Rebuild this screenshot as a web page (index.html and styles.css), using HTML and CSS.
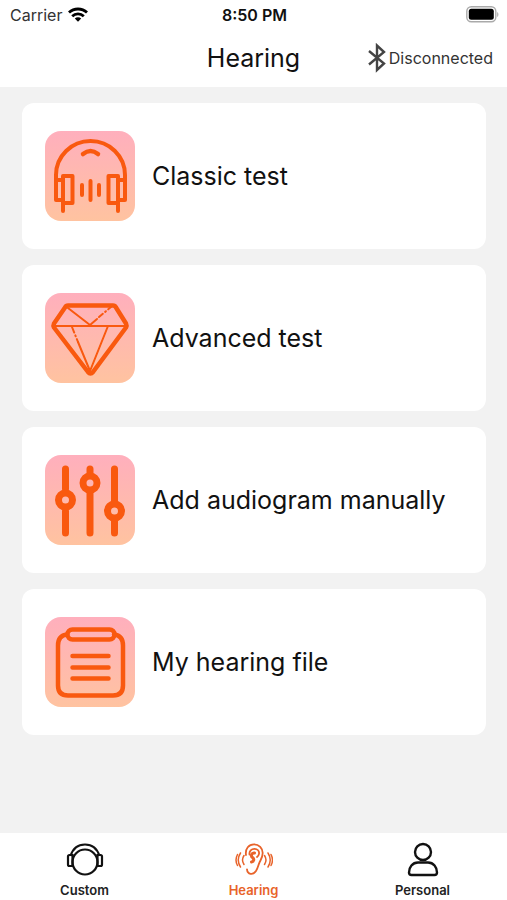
FILE: index.html
```html
<!DOCTYPE html>
<html lang="en">
<head>
    <meta charset="UTF-8">
    <meta name="viewport" content="width=device-width, initial-scale=1.0">
    <title>Hearing</title>
    <link rel="stylesheet" href="styles.css">
</head>
<body>
    <header>
        <div class="status-bar">
            <div class="carrier">
                <span>Carrier</span>
                <svg width="20" height="15" viewBox="0 0 20 15" fill="none" stroke="#000" stroke-width="2.8">
                    <path d="M1 5.6a13 13 0 0 1 18 0"/>
                    <path d="M4.2 9.2a8.4 8.4 0 0 1 11.6 0"/>
                    <path d="M10 14.8 6.8 11.6a4.6 4.6 0 0 1 6.4 0z" fill="#000" stroke="none"/>
                </svg>
            </div>
            <div class="time">8:50 PM</div>
            <div class="battery">
                <svg width="33" height="17" viewBox="0 0 33 17">
                    <rect x="0.8" y="0.8" width="29" height="15" rx="4.5" fill="none" stroke="#aaa" stroke-width="1.4"/>
                    <rect x="2.8" y="2.8" width="25" height="11" rx="2.5" fill="#000"/>
                    <path d="M31.2 6v5c1.6-.8 1.6-4.2 0-5z" fill="#aaa"/>
                </svg>
            </div>
        </div>
        <div class="title-bar">
            <h1>Hearing</h1>
            <div class="connection">
                <svg width="19" height="30" viewBox="0 0 19 30" fill="none" stroke="#444" stroke-width="2.4">
                    <path d="M1 8l15 12.500-7 6.500V2.500l7 6.500L1 21.500"/>
                </svg>
                <span>Disconnected</span>
            </div>
        </div>
    </header>

    <main>
        <button class="card">
            <svg class="card-icon" viewBox="0 0 90 90">
                <g stroke-width="4">
                    <path d="M11 49v-5a34.5 34 0 0 1 69 0v5"/>
                    <path d="M38 23q7.5-6 15 0" stroke-width="4.5"/>
                    <rect x="18" y="45" width="9.5" height="27"/>
                    <rect x="63.5" y="45" width="9.5" height="27"/>
                    <path d="M18 49h-7v20h7M73 49h7v20h-7M18 72v8M73 72v8"/>
                    <path d="M37 54v10M45.5 50v19M54 54v10"/>
                </g>
            </svg>
            <span>Classic test</span>
        </button>
        <button class="card">
            <svg class="card-icon" viewBox="0 0 90 90">
                <path d="M23 12.5h45q2 0 3 2l10 16q1 2 0 4L48 79q-2.5 3-5 0L9 34.5q-1-2 0-4l11-16q1-2 3-2z" stroke-width="4.5"/>
                <g stroke-width="2">
                    <path d="M9 33h73M23 15l22 17 7-6M63 33 45 78 33 49"/>
                    <path d="M54 24l12-10" stroke-dasharray="5 3 1 3"/>
                    <path d="M27 34l6 15" stroke-dasharray="6 3 1 3"/>
                </g>
            </svg>
            <span>Advanced test</span>
        </button>
        <button class="card">
            <svg class="card-icon" viewBox="0 0 90 90">
                <g stroke-width="7">
                    <path d="M20.5 14v20M20.5 56v22M45 14v4M45 38v40M69.5 14v32M69.5 66v12"/>
                    <circle cx="20.5" cy="45" r="7"/>
                    <circle cx="45" cy="28" r="7"/>
                    <circle cx="69.5" cy="56" r="7"/>
                </g>
            </svg>
            <span>Add audiogram manually</span>
        </button>
        <button class="card">
            <svg class="card-icon" viewBox="0 0 90 90">
                <g stroke-width="4.5">
                    <rect x="22.5" y="12.5" width="47" height="10" rx="5"/>
                    <path d="M22 17.5q-9 1-9 11v40q0 10 10 10h45q10 0 10-10v-40q0-10-9-11"/>
                    <path d="M27.500 39h36M27.500 50.500h36M27.500 61.500h36"/>
                </g>
            </svg>
            <span>My hearing file</span>
        </button>
    </main>

    <nav>
        <a href="#custom">
            <svg width="38" height="36" viewBox="0 0 38 36" fill="none" stroke="#111" stroke-width="2.2">
                <circle cx="19" cy="20" r="12.5"/>
                <path d="M4.5 14C7 6 12 2.500 19 2.500S31 6 33.500 14"/>
                <path d="M6.5 13h-3q-1.500 0-1.500 1.500v8q0 1.500 1.500 1.500h3zM31.500 13h3q1.500 0 1.500 1.500v8q0 1.500-1.500 1.500h-3z"/>
            </svg>
            <span>Custom</span>
        </a>
        <a href="#hearing" class="active">
            <svg width="38" height="36" viewBox="0 0 38 36" fill="none" stroke="#e8632a" stroke-width="1.8" stroke-linecap="round">
                <path d="M11 13C10 6.500 14 2.300 19 2.300s8.700 3.700 8.700 8.700c0 4-1.700 6.500-3 9-1.500 3-1.700 6-3.700 9-3 4.500-8.500 3.500-9-1.700"/>
                <path d="M14.500 12.500c-.5-3.500 2-5.700 5-5.700s5 2.200 4.500 5c-.3 1.500-1 2.500-2 3.200"/>
                <path d="M19.500 11c-3-.5-4 3-2 4.500s1.500 4-1 4.500" stroke-width="3"/>
                <path d="M9 13.500q-3 4.500 0 9M5.500 11q-4.500 7 0 14M2.500 12.500q-3 5.500 0 11M29.500 13.500q3 4.500 0 9M33 11q4.500 7 0 14M36 12.500q3 5.500 0 11" stroke-width="1.5"/>
            </svg>
            <span>Hearing</span>
        </a>
        <a href="#personal">
            <svg width="38" height="36" viewBox="0 0 38 36" fill="none" stroke="#111" stroke-width="2.4">
                <circle cx="19" cy="10" r="8"/>
                <path d="M14 20.5h10c5.500 0 9 4.500 9 10 0 1.500-1 2.500-2.500 2.500h-23Q5 33 5 30.500c0-5.500 3.500-10 9-10z"/>
            </svg>
            <span>Personal</span>
        </a>
    </nav>
</body>
</html>
```
FILE: styles.css
```css
* {
    box-sizing: border-box;
}
body {
    display: flex;
    flex-direction: column;
    min-height: 100vh;
    margin: 0;
    background: #f2f2f2;
    font-family: Inter, "Liberation Sans", sans-serif;
    color: #111;
}
header {
    background: #fff;
}
.status-bar {
    display: grid;
    grid-template-columns: 1fr auto 1fr;
    align-items: center;
    height: 29px;
    padding: 0 8px 0 10px;
    font-size: 16px;
}
.carrier {
    display: flex;
    align-items: center;
    gap: 6px;
    color: #333;
}
.time {
    font-weight: 600;
}
.battery {
    display: flex;
    justify-content: flex-end;
}
.title-bar {
    display: grid;
    grid-template-columns: 1fr auto 1fr;
    align-items: center;
    height: 58px;
    padding: 0 14px;
}
h1 {
    grid-column: 2;
    margin: 0;
    font-size: 25px;
    font-weight: 400;
}
.connection {
    display: flex;
    align-items: center;
    justify-content: flex-end;
    gap: 2px;
    font-size: 16px;
    color: #333;
}
main {
    flex: 1;
    display: flex;
    flex-direction: column;
    gap: 16px;
    padding: 16px 21px 16px 22px;
}
.card {
    display: flex;
    align-items: center;
    gap: 17px;
    padding: 28px 23px;
    border: none;
    border-radius: 12px;
    background: #fff;
    font-family: inherit;
    font-size: 25px;
    color: #111;
    text-align: left;
    cursor: pointer;
}
.card-icon {
    flex: none;
    width: 90px;
    height: 90px;
    border-radius: 16px;
    background: linear-gradient(#ffafbd, #ffc3a0);
    fill: none;
    stroke: #f9590f;
    stroke-linecap: round;
    stroke-linejoin: round;
}
nav {
    display: flex;
    height: 67px;
    background: #fff;
}
nav a {
    flex: 1;
    display: flex;
    flex-direction: column;
    align-items: center;
    gap: 3px;
    padding-top: 9px;
    font-size: 13px;
    line-height: 18px;
    font-weight: 600;
    color: #222;
    text-decoration: none;
}
nav a.active {
    color: #e8632a;
}
```
